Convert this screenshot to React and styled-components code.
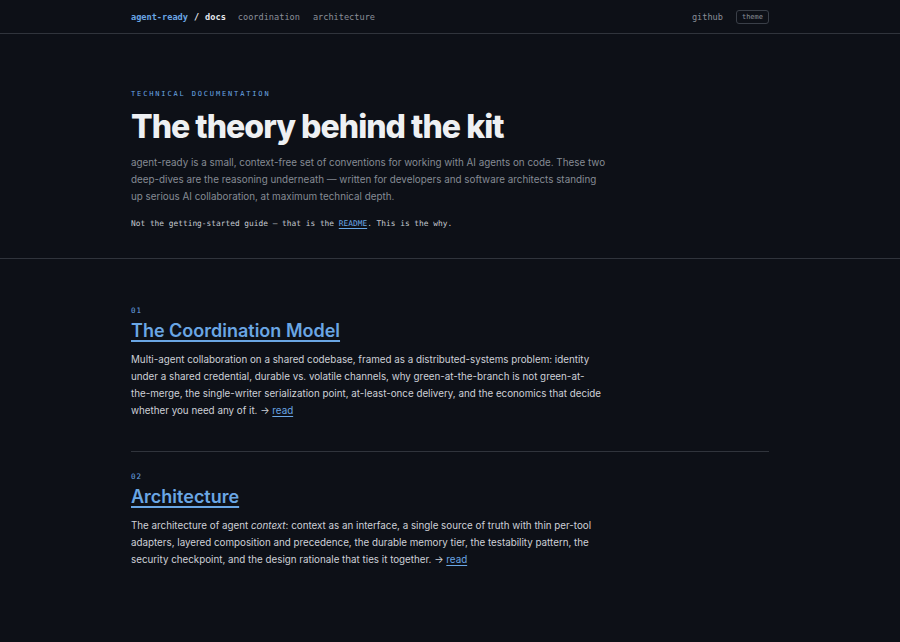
import React from 'react';
import styled, {createGlobalStyle} from 'styled-components';

const GlobalStyle = createGlobalStyle`
    html, body {
        margin: 0;
        padding: 0;
        background: #0d1017;
    }
    body {
        font-family: Inter, "Noto Sans", sans-serif;
        color: #c9ced6;
    }
`;

const mono = `"DejaVu Sans Mono", "Liberation Mono", monospace`;

const Page = styled.div`
    min-height: 642px;
    background: #0d1017;
`;

const TopBar = styled.header`
    border-bottom: 1px solid #30343c;
`;

const Container = styled.div`
    width: 638px;
    margin: 0 auto;
`;

const NavRow = styled.nav`
    height: 33px;
    display: flex;
    align-items: center;
    font-family: ${mono};
    font-size: 8.6px;
`;

const Brand = styled.span`
    color: #6aa6e4;
    font-weight: bold;
`;

const Slash = styled.span`
    color: #e6e9ee;
    font-weight: bold;
    margin: 0 6px;
`;

const Crumb = styled.span`
    color: #e6e9ee;
    font-weight: bold;
    margin-right: 12px;
`;

const NavLink = styled.a`
    color: #8a8f98;
    text-decoration: none;
    margin-right: 13px;
`;

const Spacer = styled.div`
    flex: 1;
`;

const ThemeButton = styled.button`
    font-family: ${mono};
    font-size: 7px;
    color: #8a8f98;
    background: transparent;
    border: 1px solid #3a3f48;
    border-radius: 3px;
    padding: 2px 5px;
    height: 14px;
    line-height: 8px;
`;

const Hero = styled.section`
    border-bottom: 1px solid #30343c;
    padding: 55px 0 29px;
`;

const Eyebrow = styled.div`
    font-family: ${mono};
    font-size: 7px;
    letter-spacing: 1.85px;
    color: #6aa6e4;
    line-height: 10px;
`;

const Title = styled.h1`
    margin: 8px 0 7px;
    font-family: Inter, sans-serif;
    font-weight: 800;
    font-size: 32px;
    letter-spacing: -0.96px;
    line-height: 40px;
    color: #eef0f3;
`;

const Lead = styled.p`
    margin: 0;
    max-width: 478px;
    font-size: 9.85px;
    line-height: 17px;
    color: #858b94;
`;

const Note = styled.p`
    margin: 14px 0 0;
    font-family: ${mono};
    font-size: 7.85px;
    line-height: 10px;
    color: #c4c9d0;
`;

const InlineLink = styled.a`
    color: #6aa6e4;
    text-decoration: underline;
    text-underline-offset: 2px;
`;

const Sections = styled.div`
    padding-top: 47px;
`;

const Entry = styled.article`
    padding: ${p => p.$first ? '0 0 32px' : '20px 0 32px'};
    border-bottom: ${p => p.$last ? 'none' : '1px solid #30343c'};
`;

const Number = styled.div`
    font-family: ${mono};
    font-size: 7.5px;
    letter-spacing: 1px;
    color: #6aa6e4;
    line-height: 10px;
`;

const EntryTitle = styled.h2`
    margin: 3px 0 8px;
    font-size: 18px;
    font-weight: 600;
    line-height: 24px;
`;

const EntryLink = styled.a`
    color: #6aa6e4;
    text-decoration: underline;
    text-decoration-thickness: 1.5px;
    text-underline-offset: 3px;
`;

const Body = styled.p`
    margin: 0;
    max-width: 471.5px;
    font-size: 9.8px;
    line-height: 17px;
    color: #cdd1d7;
`;

const entries = [
    {
        num: '01',
        title: 'The Coordination Model',
        body: (
            <>
                Multi-agent collaboration on a shared codebase, framed as a distributed-systems problem: identity
                under a shared credential, durable vs. volatile channels, why green-at-the-branch is not green-at-the-merge,
                the single-writer serialization point, at-least-once delivery, and the economics that decide whether
                you need any of it.
            </>
        )
    },
    {
        num: '02',
        title: 'Architecture',
        body: (
            <>
                The architecture of agent <em>context</em>: context as an interface, a single source of truth with
                thin per-tool adapters, layered composition and precedence, the durable memory tier, the testability
                pattern, the security checkpoint, and the design rationale that ties it together.
            </>
        )
    }
];

const App = () => {
    return (
        <Page>
            <GlobalStyle/>
            <TopBar>
                <Container>
                    <NavRow>
                        <Brand>agent-ready</Brand>
                        <Slash>/</Slash>
                        <Crumb>docs</Crumb>
                        <NavLink href="#coordination">coordination</NavLink>
                        <NavLink href="#architecture">architecture</NavLink>
                        <Spacer/>
                        <NavLink href="#github">github</NavLink>
                        <ThemeButton>theme</ThemeButton>
                    </NavRow>
                </Container>
            </TopBar>
            <Hero>
                <Container>
                    <Eyebrow>TECHNICAL DOCUMENTATION</Eyebrow>
                    <Title>The theory behind the kit</Title>
                    <Lead>
                        agent-ready is a small, context-free set of conventions for working with AI agents on code.
                        These two deep-dives are the reasoning underneath — written for developers and software
                        architects standing up serious AI collaboration, at maximum technical depth.
                    </Lead>
                    <Note>
                        Not the getting-started guide — that is the <InlineLink href="#readme">README</InlineLink>.
                        This is the why.
                    </Note>
                </Container>
            </Hero>
            <Container>
                <Sections>
                    {entries.map((e, i) => (
                        <Entry key={e.num} $first={i === 0} $last={i === entries.length - 1}>
                            <Number>{e.num}</Number>
                            <EntryTitle><EntryLink href="#">{e.title}</EntryLink></EntryTitle>
                            <Body>
                                {e.body} → <InlineLink href="#">read</InlineLink>
                            </Body>
                        </Entry>
                    ))}
                </Sections>
            </Container>
        </Page>
    );
};

export default App;
